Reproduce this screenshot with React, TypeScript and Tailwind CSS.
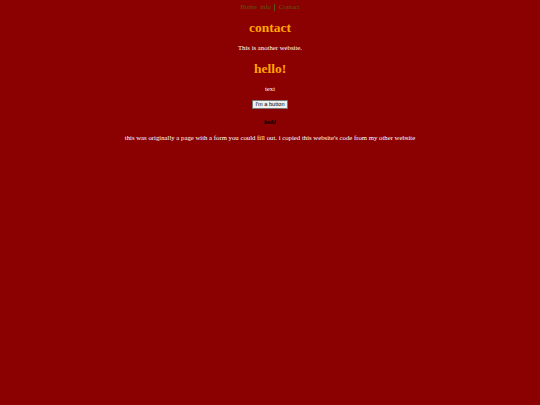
export default function App() {
  return (
    <div className="min-h-screen w-full bg-[#8b0000] antialiased">
      <div className="[zoom:0.421875] [font-variant-ligatures:none] flex flex-col items-center px-2 pt-2 text-center font-['Liberation_Serif',serif] text-[16px] leading-[18px]">
        {/* Nav */}
        <nav className="flex items-center gap-2 text-[#5e5a14]">
          <a>Home</a>
          <a>info</a>
          <span className="h-[16px] border-l border-[#5e5a14]" />
          <a>Contact</a>
        </nav>

        <h1 className="mt-[21px] text-[32px] leading-[37px] font-bold text-[#ffa500]">contact</h1>
        <p className="mt-[21px] text-white">This is another website.</p>

        <h1 className="mt-[21px] text-[32px] leading-[37px] font-bold text-[#ffa500]">hello!</h1>
        <p className="mt-[21px] text-white">text</p>

        <button className="mt-[16px] rounded-[2px] border border-[#767676] bg-[#efefef] px-[6px] py-[1px] font-['Liberation_Sans',sans-serif] text-[13.33px] leading-[15px] text-black">
          I&apos;m a button
        </button>

        <p className="mt-[22px] font-bold italic text-black">bold</p>

        <p className="mt-[20px] text-white">
          this was originally a page with a form you could fill out. i copied this website&apos;s code from my other website
        </p>
      </div>
    </div>
  );
}
